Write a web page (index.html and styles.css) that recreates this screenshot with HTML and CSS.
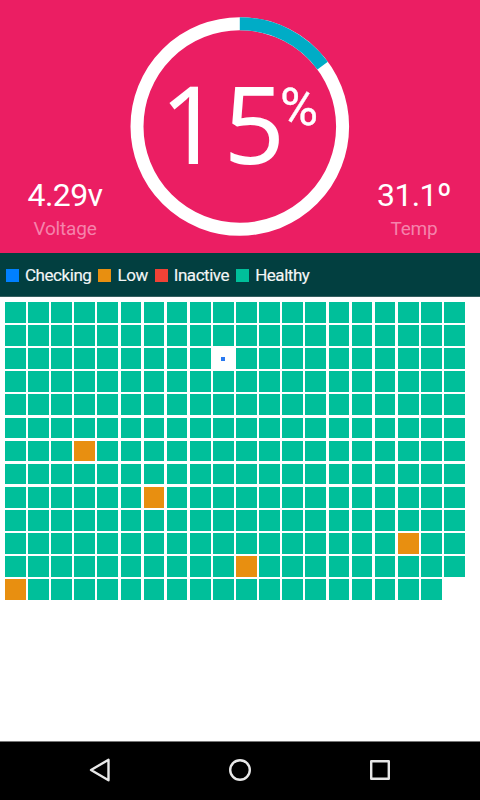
FILE: index.html
```
<!DOCTYPE html>
<html lang="en">
<head>
    <meta charset="UTF-8">
    <meta name="viewport" content="width=device-width, initial-scale=1.0">
    <title>Battery</title>

    <link rel="stylesheet" href="styles.css">
</head>
<body>
    <header>
        <div class="stat">
            <div class="value">4.29v</div>
            <div class="label">Voltage</div>
        </div>
        <div class="gauge">
            <svg class="ring" width="220" height="220" viewBox="0 0 220 220">
                <g transform="rotate(-90 109.8 109.5)">
                    <circle cx="109.8" cy="109.5" r="102.8" pathLength="100"/>
                    <circle class="level" cx="109.8" cy="109.5" r="102.8" pathLength="100" stroke-dasharray="14.9 100"/>
                </g>
            </svg>
            <div class="percent"><span class="number">15</span><span class="sign">%</span></div>
        </div>
        <div class="stat temp">
            <div class="value">31.1º</div>
            <div class="label">Temp</div>
        </div>
    </header>
    <div class="legend">
        <span class="checking">Checking</span>
        <span class="low">Low</span>
        <span class="inactive">Inactive</span>
        <span class="healthy">Healthy</span>
    </div>
    <main id="cells"></main>
    <nav>
        <svg width="24" height="28" viewBox="0 0 24 28"><path d="M3 14 20.5 3.8V24.2Z"/></svg>
        <svg width="24" height="28" viewBox="0 0 24 28"><circle cx="12" cy="14" r="9.8"/></svg>
        <svg width="24" height="28" viewBox="0 0 24 28"><rect x="3.2" y="5.2" width="17.6" height="17.6"/></svg>
    </nav>
    <script>
        const cells = document.getElementById("cells");
        const total = 259;
        const low = [123, 166, 217, 230, 240];
        const checking = 49;

        for (let i = 0; i < total; i++) {
            const cell = document.createElement("div");
            cell.className = "cell";
            if (low.includes(i)) cell.classList.add("weak");
            if (i === checking) cell.classList.add("scan");
            cells.appendChild(cell);
        }
    </script>
</body>
</html>
```

FILE: styles.css
```
* {
    box-sizing: border-box;
}
body {
    margin: 0;
    height: 800px;
    display: flex;
    flex-direction: column;
    background: #fff;
    font-family: Roboto, sans-serif;
    overflow: hidden;
}
header {
    height: 253px;
    display: grid;
    grid-template-columns: 130px 220px 130px;
    background: #eb1e63;
    color: #fff;
}
.stat {
    padding-top: 176px;
    text-align: center;
}
.temp {
    padding-right: 2px;
}
.value {
    font-size: 32px;
    line-height: 38px;
    letter-spacing: -0.6px;
}
.label {
    margin-top: 4px;
    font-size: 19px;
    line-height: 22px;
    letter-spacing: -0.2px;
    color: #f583ab;
}
.gauge {
    display: grid;
    padding-top: 17px;
    align-content: start;
}
.ring, .percent {
    grid-area: 1 / 1;
}
.ring circle {
    fill: none;
    stroke: #fff;
    stroke-width: 13;
}
.ring .level {
    stroke: #00acc6;
}
.percent {
    display: flex;
    padding-left: 30px;
}
.number {
    padding-top: 30px;
    font-family: "Noto Sans", sans-serif;
    font-size: 107px;
    line-height: 152px;
    letter-spacing: 2.6px;
}
.sign {
    margin-left: -7.5px;
    padding-top: 61px;
    font-size: 52px;
    line-height: 60px;
    -webkit-text-stroke: 0.4px #fff;
}
.legend {
    height: 44px;
    display: flex;
    gap: 7px;
    align-items: center;
    padding: 1px 6px 0;
    border-bottom: 1px solid #355f5f;
    background: #023f40;
    color: #f3f6f6;
    font-size: 17px;
    letter-spacing: -0.45px;
    -webkit-text-stroke: 0.15px #f3f6f6;
}
.legend span {
    display: flex;
    align-items: center;
    gap: 6px;
}
.legend span::before {
    content: "";
    width: 13px;
    height: 13px;
    background: #00bf9a;
}
.legend .checking::before {
    background: #0080ff;
}
.legend .low::before {
    background: #e88f10;
}
.legend .inactive::before {
    background: #f04236;
}
#cells {
    flex: 1;
    display: grid;
    grid-template-columns: repeat(20, 20.65px);
    grid-auto-rows: 20.65px;
    gap: 2.48px;
    align-content: start;
    padding: 5px;
}
.cell {
    background: #00bf9a;
}
.weak {
    background: #e88f10;
}
.scan {
    width: 4px;
    height: 4px;
    place-self: center;
    background: #2979f0;
}
nav {
    height: 59px;
    display: flex;
    justify-content: space-between;
    align-items: center;
    padding: 0 88px 2px;
    border-top: 1px solid #777;
    background: #000;
}
nav svg {
    fill: none;
    stroke: #e8e8e8;
    stroke-width: 2.4;
    stroke-linejoin: round;
}
```
